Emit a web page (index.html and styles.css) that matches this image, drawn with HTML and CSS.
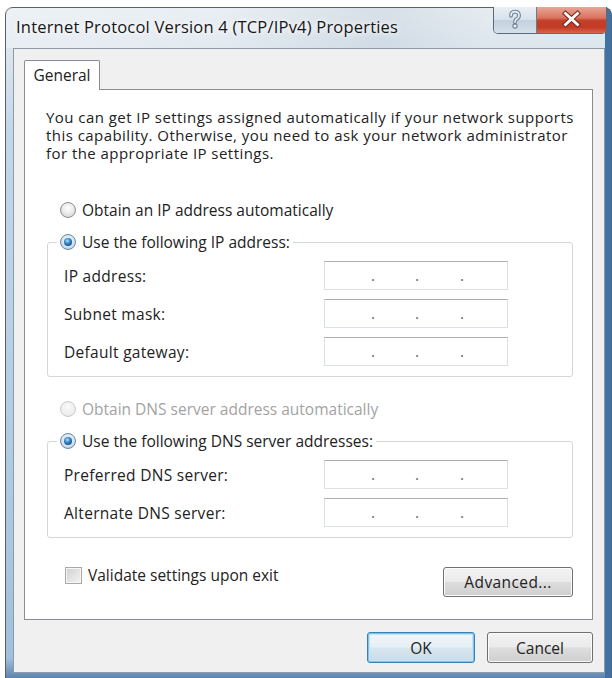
FILE: index.html
```html
<!DOCTYPE html>
<html>
<head>
<meta charset="utf-8">
<link rel="stylesheet" href="styles.css">
</head>
<body>
<div class="window">
  <div class="titlebar">
    <span class="title">Internet Protocol Version 4 (TCP/IPv4) Properties</span>
    <div class="caption-buttons">
      <span class="cap help">
        <svg width="42" height="26" viewBox="0 0 42 26">
          <path d="M17 8.8 Q17 4.6 21 4.6 Q25 4.6 25 8.4 Q25 10.8 22.3 12.2 Q21 13 21 15.2" fill="none" stroke="#6f8194" stroke-width="3.8" stroke-linecap="round"/>
          <path d="M17 8.8 Q17 4.6 21 4.6 Q25 4.6 25 8.4 Q25 10.8 22.3 12.2 Q21 13 21 15.2" fill="none" stroke="#eef2f6" stroke-width="1.6" stroke-linecap="round"/>
          <circle cx="21" cy="19" r="2.1" fill="#eef2f6" stroke="#6f8194" stroke-width="1.1"/>
        </svg>
      </span>
      <span class="cap close">
        <svg width="69" height="26" viewBox="0 0 69 26">
          <path d="M28.5 6.5 L40.5 17.5 M40.5 6.5 L28.5 17.5" stroke="#7a2c20" stroke-width="5" stroke-linecap="square"/>
          <path d="M28.5 6.5 L40.5 17.5 M40.5 6.5 L28.5 17.5" stroke="#ffffff" stroke-width="2.8" stroke-linecap="square"/>
        </svg>
      </span>
    </div>
  </div>
  <div class="client">
    <div class="tabs">
      <div class="tab">General</div>
    </div>
    <div class="panel">
      <p class="desc">You can get IP settings assigned automatically if your network supports<br>this capability. Otherwise, you need to ask your network administrator<br>for the appropriate IP settings.</p>

      <label class="radio-row first"><span class="radio"></span>Obtain an IP address automatically</label>

      <fieldset class="group">
        <legend><label class="radio-row"><span class="radio checked"></span>Use the following IP address:</label></legend>
        <div class="field"><span class="label">IP address:</span><div class="ipbox"><span></span><span class="dot">.</span><span></span><span class="dot">.</span><span></span><span class="dot">.</span><span></span></div></div>
        <div class="field"><span class="label">Subnet mask:</span><div class="ipbox"><span></span><span class="dot">.</span><span></span><span class="dot">.</span><span></span><span class="dot">.</span><span></span></div></div>
        <div class="field"><span class="label">Default gateway:</span><div class="ipbox"><span></span><span class="dot">.</span><span></span><span class="dot">.</span><span></span><span class="dot">.</span><span></span></div></div>
      </fieldset>

      <label class="radio-row second disabled"><span class="radio"></span>Obtain DNS server address automatically</label>

      <fieldset class="group">
        <legend><label class="radio-row"><span class="radio checked"></span>Use the following DNS server addresses:</label></legend>
        <div class="field"><span class="label">Preferred DNS server:</span><div class="ipbox"><span></span><span class="dot">.</span><span></span><span class="dot">.</span><span></span><span class="dot">.</span><span></span></div></div>
        <div class="field"><span class="label">Alternate DNS server:</span><div class="ipbox"><span></span><span class="dot">.</span><span></span><span class="dot">.</span><span></span><span class="dot">.</span><span></span></div></div>
      </fieldset>

      <div class="bottom-row">
        <label class="check-row"><span class="checkbox"></span>Validate settings upon exit</label>
        <button class="btn advanced">Advanced...</button>
      </div>
    </div>
    <div class="dialog-buttons">
      <button class="btn default ok">OK</button>
      <button class="btn cancel">Cancel</button>
    </div>
  </div>
</div>
</body>
</html>
```

FILE: styles.css
```css
html, body {
  margin: 0;
  padding: 0;
}

body {
  width: 612px;
  height: 678px;
  overflow: hidden;
  background: #ffffff;
  font-family: "Open Sans", "Noto Sans", "DejaVu Sans", sans-serif;
  font-size: 15.5px;
  color: #222222;
}

.window {
  box-sizing: border-box;
  width: 607px;
  height: 671px;
  margin: 7px 0 0 5px;
  border: 1px solid #56616c;
  border-bottom: none;
  border-radius: 8px 8px 0 0;
  padding: 0 6px 5px 7px;
  display: flex;
  flex-direction: column;
  background:
    linear-gradient(90deg, rgba(255,255,255,0) 0, rgba(255,255,255,0) 99%, #3f72a6 99%),
    linear-gradient(180deg, #e6ecf1 0, #dde6ee 40px, #c4d7e8 120px, #b4cde4 60%, #a2c0dc 97%, #5b84ad 100%);
}

.titlebar {
  height: 40px;
  display: flex;
  align-items: flex-start;
  background: linear-gradient(90deg, rgba(255,255,255,0.3) 0, rgba(255,255,255,0.15) 35%, rgba(150,170,190,0.18) 62%, rgba(255,255,255,0) 80%);
  margin: 0 -6px 0 -7px;
  padding: 0 6px 0 7px;
}

.title {
  margin: 8px 0 0 3px;
  font-size: 16.5px;
  letter-spacing: 0.2px;
  line-height: 22px;
  color: #161616;
  white-space: nowrap;
  text-shadow: 0 0 5px #ffffff, 0 0 9px rgba(255,255,255,0.9);
}

.caption-buttons {
  margin-left: auto;
  margin-right: -2px;
  margin-top: -1px;
  display: flex;
  height: 26px;
  border: 1px solid #5d6b79;
  border-top: none;
  border-radius: 0 0 5px 5px;
  overflow: hidden;
}

.cap {
  display: block;
  height: 26px;
}

.cap svg {
  display: block;
}

.cap.help {
  width: 42px;
  border-right: 1px solid #6d7c8b;
  background: linear-gradient(180deg, #e9eff4 0, #d8e2eb 48%, #c3d1de 52%, #d5e0ea 100%);
}

.cap.close {
  width: 69px;
  background: linear-gradient(180deg, #e9a797 0, #d9735e 42%, #c4402a 52%, #c23a25 78%, #d9654b 100%);
}

.client {
  flex: 1;
  display: flex;
  flex-direction: column;
  border: 1px solid #8d9aa8;
  background: #f0f0f0;
  padding: 11px 11px 9px 10px;
}

.tabs {
  display: flex;
  height: 29px;
  position: relative;
  z-index: 1;
}

.tab {
  box-sizing: border-box;
  width: 76px;
  height: 30px;
  border: 1px solid #898c95;
  border-bottom: none;
  border-radius: 2px 2px 0 0;
  background: #ffffff;
  text-align: center;
  line-height: 28px;
}

.panel {
  flex: 1;
  border: 1px solid #898c95;
  background: #ffffff;
  padding: 18px 19px 21px 21px;
  display: flex;
  flex-direction: column;
}

.desc {
  margin: 0;
  font-size: 15px;
  line-height: 18px;
  letter-spacing: 0.45px;
  white-space: nowrap;
}

.radio-row {
  display: flex;
  align-items: center;
  height: 20px;
  gap: 6px;
  white-space: nowrap;
}

.radio-row.first {
  margin: 38px 0 0 14px;
}

.radio-row.second {
  margin: 22px 0 0 14px;
}

.radio-row.disabled {
  color: #a3a3a3;
}

.radio {
  position: relative;
  flex: none;
  box-sizing: border-box;
  width: 16px;
  height: 16px;
  border-radius: 50%;
  border: 1px solid #8c8e90;
  background: radial-gradient(circle at 50% 38%, #ffffff 0, #ececec 45%, #c9c9c9 100%);
}

.radio.checked {
  border-color: #6b8aa8;
  background: radial-gradient(circle at 50% 40%, #f2f7fb 0, #d6e3ee 55%, #aabfd2 100%);
}

.radio.checked::after {
  content: "";
  position: absolute;
  left: 3px;
  top: 3px;
  width: 8px;
  height: 8px;
  border-radius: 50%;
  background: radial-gradient(circle at 42% 35%, #b5e2fb 0, #3d8fd0 35%, #134f8c 75%, #0b3564 100%);
}

.disabled .radio {
  border-color: #cbcbcb;
  background: radial-gradient(circle at 50% 38%, #fafafa 0, #eeeeee 60%, #e0e0e0 100%);
}

.group {
  margin: 12px 0 0 1px;
  min-width: 0;
  border: 1px solid #d6d6d6;
  border-radius: 3px;
  padding: 9px 0 10px 16px;
}

.group legend {
  margin-left: -7px;
  padding: 0 3px;
}

.field {
  display: flex;
  align-items: center;
  height: 29px;
}

.field + .field {
  margin-top: 9px;
}

.field .label {
  width: 260px;
  flex: none;
  letter-spacing: 0.3px;
}

.ipbox {
  box-sizing: border-box;
  width: 184px;
  height: 29px;
  border: 1px solid #dbe0e5;
  border-top-color: #abadb3;
  background: #ffffff;
  display: grid;
  grid-template-columns: 45px 6px 38px 6px 39px 6px 1fr;
  line-height: 27px;
}

.ipbox .dot {
  text-align: center;
  color: #6a6a6a;
}

.bottom-row {
  display: flex;
  justify-content: space-between;
  align-items: flex-start;
  margin-top: 27px;
}

.check-row {
  display: flex;
  align-items: center;
  height: 20px;
  gap: 6px;
  margin-left: 19px;
  white-space: nowrap;
}

.checkbox {
  flex: none;
  box-sizing: border-box;
  width: 17px;
  height: 17px;
  border: 1px solid #a9a9a9;
  background: linear-gradient(135deg, #cfcfcf 0, #e4e4e4 55%, #f3f3f3 100%);
  box-shadow: inset 0 0 0 1px #f6f6f6;
}

.btn {
  box-sizing: border-box;
  font: inherit;
  color: #222222;
  padding: 0;
  border: 1px solid #707070;
  border-radius: 3px;
  background: linear-gradient(180deg, #f3f3f3 0, #ebebeb 48%, #dddddd 52%, #cfcfcf 100%);
  box-shadow: inset 0 0 0 1px #fbfbfb;
}

.btn.advanced {
  width: 130px;
  height: 30px;
  margin-top: 2px;
  letter-spacing: 0.4px;
}

.dialog-buttons {
  display: flex;
  justify-content: flex-end;
  gap: 12px;
  margin-top: 12px;
}

.btn.ok {
  width: 108px;
  height: 31px;
  border-color: #3c7fb1;
  background: linear-gradient(180deg, #f1f6f9 0, #e6eff5 48%, #d7e5ee 52%, #cadbe7 100%);
  box-shadow: inset 0 0 0 1px #7fc4ee, inset 0 0 0 2px #bfe3f7;
}

.btn.cancel {
  width: 106px;
  height: 31px;
}
```
